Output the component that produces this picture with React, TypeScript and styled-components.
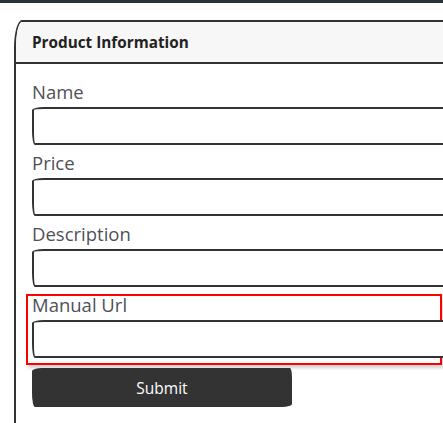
import styled, { createGlobalStyle } from 'styled-components';

const GlobalStyle = createGlobalStyle`
  body {
    margin: 0;
    background: #fff;
    overflow: hidden;
    font-family: "Open Sans", Lato, sans-serif;
  }
`;

const fields = [
  { label: 'Name' },
  { label: 'Price' },
  { label: 'Description' },
  { label: 'Manual Url', focused: true },
];

function App() {
  return (
    <Page>
      <GlobalStyle />
      <TopBar />
      <Wrapper>
        <Card>
          <CardHeader>Product Information</CardHeader>
          <CardBody>
            {fields.map((f) => (
              <FieldGroup key={f.label} $focused={f.focused}>
                <Label>{f.label}</Label>
                <Input type="text" />
              </FieldGroup>
            ))}
            <SubmitButton type="button">Submit</SubmitButton>
          </CardBody>
        </Card>
      </Wrapper>
    </Page>
  );
}

export default App;

const Page = styled.div`
  width: 443px;
  height: 423px;
  overflow: hidden;
`;

const TopBar = styled.div`
  height: 3px;
  background: #27353b;
`;

const Wrapper = styled.div`
  padding: 17px 0 0 14px;
`;

const Card = styled.div`
  width: 500px;
  border: 2px solid #333;
  border-top-left-radius: 8px 28px;
  min-height: 440px;
  box-sizing: border-box;
`;

const CardHeader = styled.div`
  height: 40px;
  display: flex;
  align-items: center;
  padding-left: 16px;
  background: #f7f7f7;
  border-bottom: 2px solid #333;
  border-top-left-radius: 6px 26px;
  font-family: "Open Sans", Lato, sans-serif;
  font-weight: 700;
  font-size: 15.3px;
  color: #222;
`;

type FieldGroupProps = {
  $focused?: boolean;
};

const CardBody = styled.div`
  padding: 17px 0 0 10px;
`;

const FieldGroup = styled.div<FieldGroupProps>`
  width: 416px;
  box-sizing: border-box;
  padding: 0 0 5px 4px;
  border: 2px solid ${(p) => (p.$focused ? '#f00' : 'transparent')};
  box-shadow: ${(p) => (p.$focused ? '2px 3px 3px rgba(0, 0, 0, 0.18)' : 'none')};
`;

const Label = styled.div`
  font-family: "Open Sans", Lato, sans-serif;
  font-size: 18.5px;
  line-height: 18px;
  color: #505058;
  margin-bottom: 6px;
`;

const Input = styled.input`
  display: block;
  width: 440px;
  height: 38px;
  box-sizing: border-box;
  border: 2px solid #333;
  border-top-left-radius: 12px 3px;
  border-bottom-left-radius: 3px 14px;
  background: #fff;
  outline: none;
`;

const SubmitButton = styled.button`
  display: block;
  margin: 3px 0 0 6px;
  width: 260px;
  height: 39px;
  border: none;
  background: #333;
  color: #fff;
  font-family: "Open Sans", Lato, sans-serif;
  font-size: 15.5px;
  border-top-left-radius: 10px 3px;
  border-bottom-left-radius: 3px 14px;
  border-bottom-right-radius: 10px 3px;
  border-top-right-radius: 2px 10px;
  cursor: pointer;
`;
